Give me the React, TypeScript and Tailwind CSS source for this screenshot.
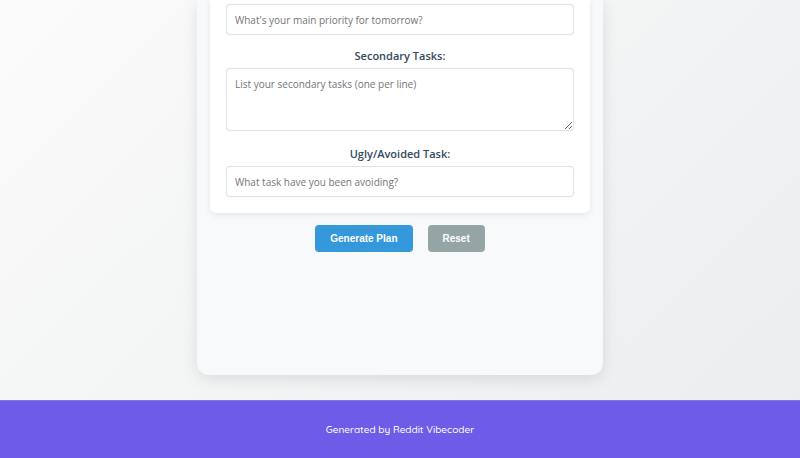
import { useState } from "react";

const field =
  "block w-full rounded border border-[#dde5ea] bg-white px-2 font-['Segoe_UI','Open_Sans',sans-serif] text-[10px] leading-4 text-[#2c3e50] shadow-[0_0_1px_#dde5ea] placeholder:text-[#757575] focus:border-[#3498db] focus:outline-none";
const label =
  "mb-1 block text-center font-['Segoe_UI','Open_Sans',sans-serif] text-[11px] leading-4 font-semibold text-[#34495e]";
const button =
  "h-[27px] cursor-pointer rounded px-[15px] font-['Liberation_Sans',Arial,sans-serif] text-[10px] font-bold text-white";

export default function App() {
  const [priority, setPriority] = useState("");
  const [tasks, setTasks] = useState("");
  const [avoided, setAvoided] = useState("");

  const reset = () => {
    setPriority("");
    setTasks("");
    setAvoided("");
  };

  return (
    <div className="flex min-h-screen flex-col bg-linear-135 from-[#fbfbfb] to-[#ebedee]">
      <main className="flex-1 px-4 pb-[25px]">
        <form
          className="mx-auto flex min-h-[375px] w-full max-w-[406px] flex-col rounded-b-xl bg-[#f8f9fb] px-[13px] shadow-[0_4px_16px_rgba(0,0,0,0.1)]"
          onSubmit={(e) => e.preventDefault()}
        >
          <section className="rounded-b-md bg-white px-4 pt-1 pb-4 shadow-[0_2px_6px_rgba(0,0,0,0.08)]">
            <input
              aria-label="Main priority"
              className={`${field} h-[31px]`}
              placeholder="What's your main priority for tomorrow?"
              value={priority}
              onChange={(e) => setPriority(e.target.value)}
            />
            <div className="mt-[13px]">
              <label htmlFor="secondary" className={label}>
                Secondary Tasks:
              </label>
              <textarea
                id="secondary"
                className={`${field} h-[63px] resize-y py-[7px]`}
                placeholder="List your secondary tasks (one per line)"
                value={tasks}
                onChange={(e) => setTasks(e.target.value)}
              />
            </div>
            <div className="mt-[15px]">
              <label htmlFor="avoided" className={label}>
                Ugly/Avoided Task:
              </label>
              <input
                id="avoided"
                className={`${field} h-[31px]`}
                placeholder="What task have you been avoiding?"
                value={avoided}
                onChange={(e) => setAvoided(e.target.value)}
              />
            </div>
          </section>
          <div className="mt-3 flex justify-center gap-[15px]">
            <button type="submit" className={`${button} bg-[#3498db]`}>
              Generate Plan
            </button>
            <button type="button" onClick={reset} className={`${button} bg-[#95a5a6]`}>
              Reset
            </button>
          </div>
        </form>
      </main>
      <footer className="flex h-[58px] items-center justify-center border-t border-[#8573ea] bg-[#6c5ce7] font-[Quicksand,Lato,sans-serif] text-[10px] font-medium text-white">
        <p>Generated by Reddit Vibecoder</p>
      </footer>
    </div>
  );
}
